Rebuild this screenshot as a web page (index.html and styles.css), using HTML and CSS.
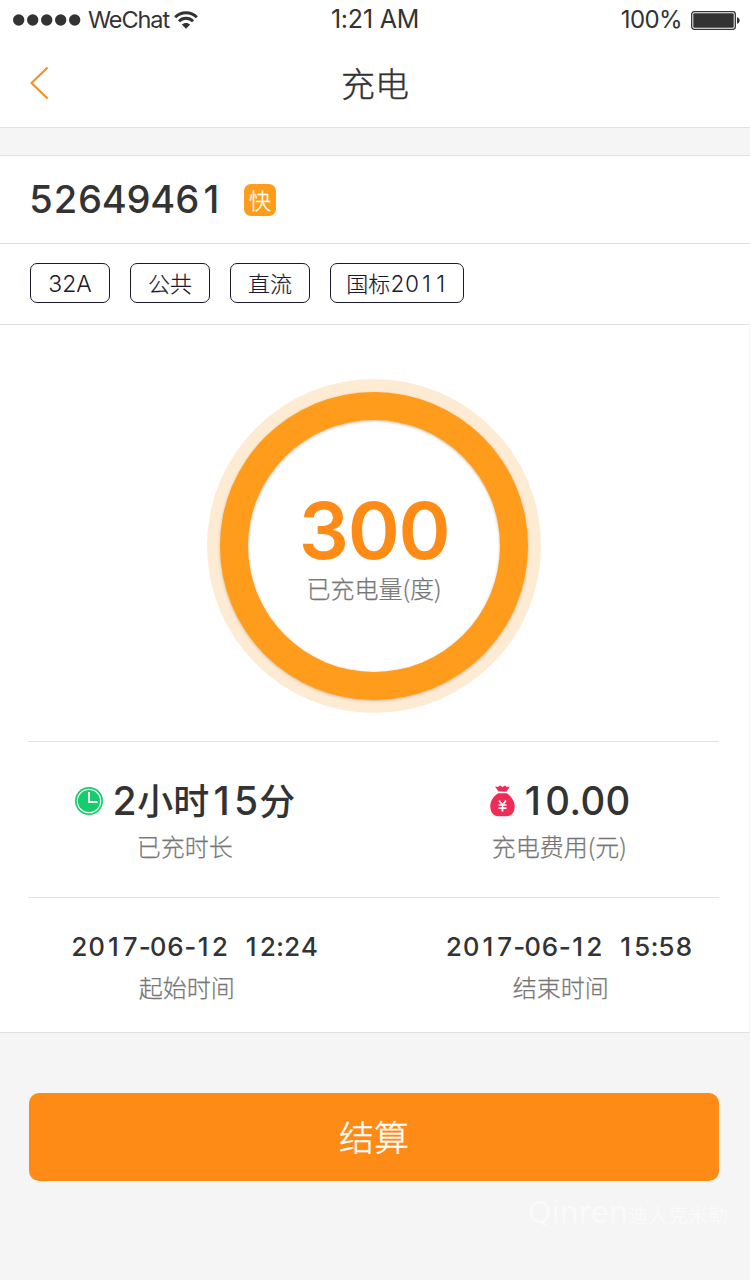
FILE: index.html
```html
<!DOCTYPE html>
<html lang="zh-CN">
<head>
<meta charset="utf-8">
<title>充电</title>
<link rel="stylesheet" href="styles.css">
</head>
<body>
<div class="status">
  <div class="status-left">
    <svg width="68" height="12" viewBox="0 0 68 12" fill="#333"><circle cx="5.7" cy="6" r="5.7"/><circle cx="19.7" cy="6" r="5.7"/><circle cx="33.7" cy="6" r="5.7"/><circle cx="47.7" cy="6" r="5.7"/><circle cx="61.7" cy="6" r="5.7"/></svg>
    <span class="carrier">WeChat</span>
    <svg class="wifi" width="24" height="18" viewBox="0 0 24 18"><g fill="none" stroke="#333" stroke-width="3"><path d="M1.2 6.2C7.2.1 16.8.1 22.8 6.2"/><path d="M4.9 10.2c4-3.9 10.2-3.9 14.2 0"/></g><path d="M7.8 13.6c2.4-2.2 6-2.2 8.4 0L12 17.8z" fill="#333"/></svg>
  </div>
  <div class="clock">1:21 AM</div>
  <div class="status-right">
    <span>100%</span>
    <svg width="49" height="19" viewBox="0 0 49 19"><rect x=".7" y=".7" width="43.6" height="17.6" rx="2.5" fill="none" stroke="#333" stroke-width="1.3"/><rect x="2.3" y="2.3" width="40.4" height="14.4" rx="1" fill="#333"/><path d="M46 6.3c3.6 1 3.6 5.4 0 6.4z" fill="#333"/></svg>
  </div>
</div>
<header class="nav">
  <svg class="back" width="20" height="34" viewBox="0 0 20 34"><path d="M17.500 1.500 1.500 17l16 15.500" fill="none" stroke="#f78b1f" stroke-width="2"/></svg>
  <h1>充电</h1>
</header>
<div class="gap"></div>
<section class="station">
  <span class="station-id digits">5264946<i>1</i></span>
  <span class="fast">快</span>
</section>
<section class="tags">
  <span class="tag num">32A</span>
  <span class="tag">公共</span>
  <span class="tag">直流</span>
  <span class="tag long">国标<span class="num digits">20<i>1</i><i>1</i></span></span>
</section>
<main class="panel">
  <div class="gauge">
    <div class="ring">
      <div class="dial">
        <div class="amount">300</div>
        <div class="label">已充电量(度)</div>
      </div>
    </div>
  </div>
  <div class="stats big">
    <div class="stat duration">
      <div class="value">
        <svg width="28" height="28" viewBox="0 0 28 28"><circle cx="14" cy="14" r="14" fill="#16cd6c"/><circle cx="14" cy="14" r="11.700" fill="none" stroke="#fff" stroke-width="1.200"/><path d="M14 5v10h8.500" fill="none" stroke="#fff" stroke-width="2"/></svg>
        <span class="text digits"><b>2</b>小时<b><i>1</i>5</b>分</span>
      </div>
      <div class="label">已充时长</div>
    </div>
    <div class="stat cost">
      <div class="value">
        <svg width="25" height="32" viewBox="0 0 25 32"><g fill="#ee2c55"><path d="M5 1.500 8 2l2-1.500L12.500 2 15 .5 17 2l3-.5-3.500 5h-8z"/><path d="M8.300 8.300h8.400C21 11 24.700 15.500 24.700 21.300c0 6.500-3.500 10-8.200 10h-8c-4.700 0-8.200-3.500-8.200-10C.3 15.500 4 11 8.300 8.300z"/></g><path d="m9 15.500 3.500 4.500 3.500-4.500M8.500 20h8M8.500 23.200h8M12.500 20v6.500" fill="none" stroke="#fff" stroke-width="1.700"/></svg>
        <span class="text digits"><b><i>1</i>0.00</b></span>
      </div>
      <div class="label">充电费用(元)</div>
    </div>
  </div>
  <div class="stats">
    <div class="stat start">
      <div class="date digits"><span>20<i>1</i>7<u>-</u>06<u>-</u><i>1</i>2</span><span><i>1</i>2:24</span></div>
      <div class="label">起始时间</div>
    </div>
    <div class="stat end">
      <div class="date digits"><span>20<i>1</i>7<u>-</u>06<u>-</u><i>1</i>2</span><span><i>1</i>5:58</span></div>
      <div class="label">结束时间</div>
    </div>
  </div>
</main>
<footer>
  <button class="settle">结算</button>
  <div class="mark"><b>Qinren</b>迪人克米勒</div>
</footer>
</body>
</html>
```

FILE: styles.css
```css
* { box-sizing: border-box; }
body {
  margin: 0;
  width: 750px;
  height: 1280px;
  overflow: hidden;
  background: #f5f5f5;
  color: #333;
  font-family: Inter, "Noto Sans CJK SC", sans-serif;
}
svg { display: block; flex: none; }
.status {
  display: grid;
  grid-template-columns: 1fr auto 1fr;
  height: 40px;
  background: #fff;
  font: 400 24px/40px Inter, sans-serif;
}
.status-left { display: flex; align-items: center; padding-left: 13px; }
.carrier { width: 82px; margin-left: 7px; font-size: 23.500px; letter-spacing: -1.1px; }
.wifi { margin-left: 4px; }
.clock { font-size: 25px; line-height: 39px; letter-spacing: -0.2px; }
.status-right { display: flex; align-items: center; justify-content: flex-end; gap: 9px; padding-right: 10px; letter-spacing: -0.6px; }
.nav {
  display: grid;
  grid-template-columns: 1fr auto 1fr;
  align-items: center;
  height: 88px;
  padding: 0 30px 1px;
  background: #fff;
  border-bottom: 1px solid #e1e1e1;
}
.nav h1 { margin: 0; font: 300 34px/50px "Noto Sans CJK SC", sans-serif; -webkit-text-stroke: 0.4px; }
.gap { height: 27px; }
.digits { font-feature-settings: "tnum"; }
.digits i {
  display: inline-block;
  width: 0.63em;
  font-style: normal;
  font-feature-settings: "tnum" 0;
  text-align: center;
}
.digits u {
  display: inline-block;
  width: 11px;
  font-feature-settings: "tnum" 0;
  text-align: center;
  text-decoration: none;
}
.station {
  display: flex;
  align-items: center;
  height: 89px;
  padding: 1px 29px 0;
  background: #fff;
  border-top: 1px solid #e1e1e1;
  border-bottom: 1px solid #e1e1e1;
}
.station-id {
  width: 215px;
  padding-bottom: 3px;
  font: 550 38px/44px Inter, sans-serif;
  font-feature-settings: "tnum";
  letter-spacing: -0.3px;
}
.fast {
  width: 32px;
  height: 32px;
  border-radius: 7px;
  background: #ff9c1b;
  color: #fff;
  font: 300 22px/31px "Noto Sans CJK SC", sans-serif;
  text-align: center;
  -webkit-text-stroke: 0.3px;
}
.tags {
  display: flex;
  gap: 20px;
  height: 81px;
  padding: 19px 30px;
  background: #fff;
  border-bottom: 1px solid #e1e1e1;
}
.tag {
  width: 80px;
  height: 40px;
  border: 1px solid #1b1930;
  border-radius: 7px;
  color: #1b1930;
  font: 300 22px/37px "Noto Sans CJK SC", sans-serif;
  text-align: center;
  -webkit-text-stroke: 0.2px;
}
.num { font-family: Inter, sans-serif; font-size: 22.500px; -webkit-text-stroke: 0; }
.tag.num { font-size: 23px; line-height: 40px; }
.long { width: 134px; }
.panel {
  height: 708px;
  padding: 54px 30px 0 28px;
  background: #fff;
  border-right: 1px solid #f8f8f8;
  border-bottom: 1px solid #e1e1e1;
}
.gauge {
  width: 334px;
  height: 334px;
  margin: 0 0 28px 179px;
  padding: 13px;
  border-radius: 50%;
  background: #feebd3;
}
.ring {
  width: 308px;
  height: 308px;
  padding: 28px;
  border-radius: 50%;
  background: #ff9c1b;
  box-shadow: 0 1px 3px rgba(100, 60, 0, 0.3);
}
.dial {
  width: 252px;
  height: 252px;
  padding-top: 71px;
  border-radius: 50%;
  background: #fff;
  box-shadow: inset 0 1px 3px rgba(100, 60, 0, 0.35);
  text-align: center;
}
.amount { height: 80px; color: #ff8b17; font: 600 79px/79px Inter, sans-serif; letter-spacing: -1.4px; }
.label { color: #777; font: 300 24px/34px "Noto Sans CJK SC", sans-serif; -webkit-text-stroke: 0.25px; }
.stats { display: grid; grid-template-columns: 1fr 1fr; border-top: 1px solid #e3e3e3; }
.big { height: 156px; padding-top: 34px; }
.stat { text-align: center; }
.value { display: flex; align-items: center; height: 50px; }
.text { padding-bottom: 3px; font: 500 36px/50px "Noto Sans CJK SC", sans-serif; white-space: nowrap; }
.text b { font: 550 39px/50px Inter, sans-serif; font-feature-settings: "tnum"; }
.duration .value { padding-left: 47px; gap: 9px; }
.duration .label { margin: 3px 32px 0 0; }
.cost .value { padding-left: 116px; gap: 6px; }
.cost .text b { letter-spacing: -0.3px; }
.cost .label { margin: 3px 0 0 26px; }
.date {
  display: flex;
  height: 36px;
  margin-top: 31px;
  font: 550 26px/36px Inter, sans-serif;
  font-feature-settings: "tnum";
  letter-spacing: 0.3px;
  text-align: left;
}
.date span:first-child { width: 172px; }
.start .date { padding-left: 43px; }
.end .date { padding-left: 72px; }
.start .label { margin: 5px 28px 0 0; }
.end .label { margin: 5px 0 0 29px; }
footer { padding: 60px 31px 0 29px; }
.settle {
  display: block;
  width: 690px;
  height: 88px;
  padding: 0 0 3px;
  border: 0;
  border-radius: 10px;
  background: #ff8b17;
  color: #fff;
  font: 300 35px/50px "Noto Sans CJK SC", sans-serif;
  -webkit-text-stroke: 0.4px;
}
.mark { margin: 16px -9px 0 0; color: #fafafa; font: 400 20px/32px "Noto Sans CJK SC", sans-serif; text-align: right; }
.mark b { font: 400 30px/32px "DejaVu Sans", sans-serif; }
```
